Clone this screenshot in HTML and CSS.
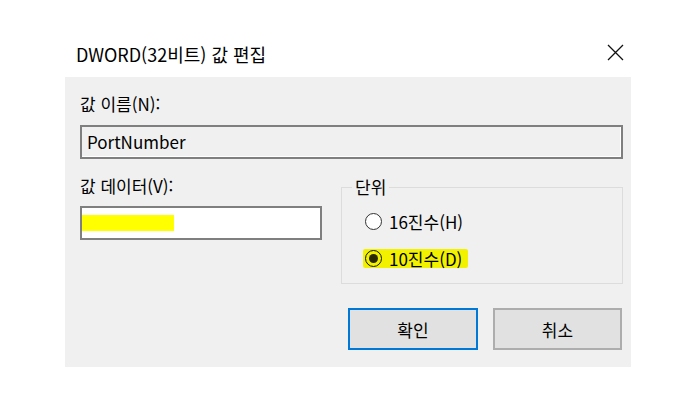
FILE: index.html
```html
<!DOCTYPE html>
<html lang="ko">
<head>
    <meta charset="UTF-8">
    <title>DWORD(32비트) 값 편집</title>
    <link rel="stylesheet" href="styles.css">
</head>
<body>
    <div class="dialog">
        <div class="titlebar">
            <span class="title">DWORD(32비트) 값 편집</span>
            <span class="close">
                <svg width="17" height="17" viewBox="0 0 17 17">
                    <path d="M1 1 L16 16 M16 1 L1 16" stroke="#111" stroke-width="1.3" fill="none"/>
                </svg>
            </span>
        </div>

        <div class="panel">
            <div class="label">값 이름(N):</div>
            <div class="textbox readonly">PortNumber</div>

            <div class="columns">
                <div class="col-left">
                    <div class="label">값 데이터(V):</div>
                    <div class="textbox data"><span class="marker"></span></div>
                </div>

                <fieldset class="group">
                    <legend>단위</legend>
                    <div class="option">
                        <span class="radio"></span>
                        <span>16진수(H)</span>
                    </div>
                    <div class="option">
                        <span class="highlight">
                            <span class="radio checked"></span>
                            <span>10진수(D)</span>
                        </span>
                    </div>
                </fieldset>
            </div>

            <div class="buttons">
                <button class="btn default">확인</button>
                <button class="btn">취소</button>
            </div>
        </div>
    </div>
</body>
</html>
```

FILE: styles.css
```css
/* General */
body {
    margin: 0;
    background-color: #ffffff;
    font-family: "Noto Sans CJK KR", "Noto Sans", sans-serif;
    color: #000;
}

/* Dialog */
.dialog {
    width: 566px;
    margin-left: 65px;
}

.titlebar {
    height: 77px;
    display: flex;
    align-items: flex-start;
    justify-content: space-between;
    padding: 43px 7px 0 11px;
    box-sizing: border-box;
}

.title {
    font-size: 18px;
    line-height: 22px;
}

.close {
    display: flex;
    margin-top: 1px;
}

/* Body panel */
.panel {
    background-color: #f0f0f0;
    height: 290px;
    box-sizing: border-box;
    padding: 17px 8px 0 15px;
}

.label {
    font-size: 17px;
    line-height: 20px;
    height: 20px;
}

.textbox {
    box-sizing: border-box;
    height: 34px;
    border: 2px solid #7f7f7f;
    font-size: 17px;
    line-height: 30px;
    padding-left: 5px;
}

.readonly {
    margin-top: 11px;
    background-color: #f0f0f0;
    box-shadow: inset -1px -1px 0 #ffffff;
}

.columns {
    display: flex;
    gap: 19px;
    margin-top: 17px;
}

.col-left {
    width: 242px;
}

.data {
    margin-top: 10px;
    background-color: #ffffff;
    padding: 7px 0 0 0;
}

.marker {
    display: block;
    width: 92px;
    height: 16px;
    background-color: #ffff00;
}

/* Unit group */
.group {
    width: 282px;
    box-sizing: border-box;
    height: 108px;
    margin: 0;
    padding: 0;
    border: 1px solid #dcdcdc;
    min-width: 0;
}

.group legend {
    font-size: 17px;
    line-height: 22px;
    padding: 0 3px;
    margin-left: 10px;
}

.option {
    display: flex;
    align-items: center;
    height: 20px;
    font-size: 17px;
    margin: 13px 0 0 23px;
}

.option + .option {
    margin-top: 17px;
}

.option span {
    display: inline-flex;
    align-items: center;
}

.radio {
    box-sizing: border-box;
    width: 17px;
    height: 17px;
    border: 1.5px solid #333;
    border-radius: 50%;
    background-color: #fff;
    margin-right: 7px;
    justify-content: center;
}

.radio.checked {
    border-color: #111;
    background-color: transparent;
}

.radio.checked::after {
    content: "";
    width: 9px;
    height: 9px;
    border-radius: 50%;
    background-color: #2a2a00;
}

.highlight {
    background-color: #f2f200;
    padding: 0 6px 0 2px;
    margin-left: -2px;
    height: 19px;
    border-radius: 2px;
}

/* Buttons */
.buttons {
    display: flex;
    justify-content: flex-end;
    gap: 15px;
    margin-top: 24px;
    padding-right: 1px;
}

.btn {
    font-family: inherit;
    font-size: 17px;
    width: 129px;
    height: 42px;
    background-color: #e1e1e1;
    border: 2px solid #adadad;
    color: #000;
    padding: 0;
}

.btn.default {
    width: 130px;
    border-color: #0078d7;
}
```
